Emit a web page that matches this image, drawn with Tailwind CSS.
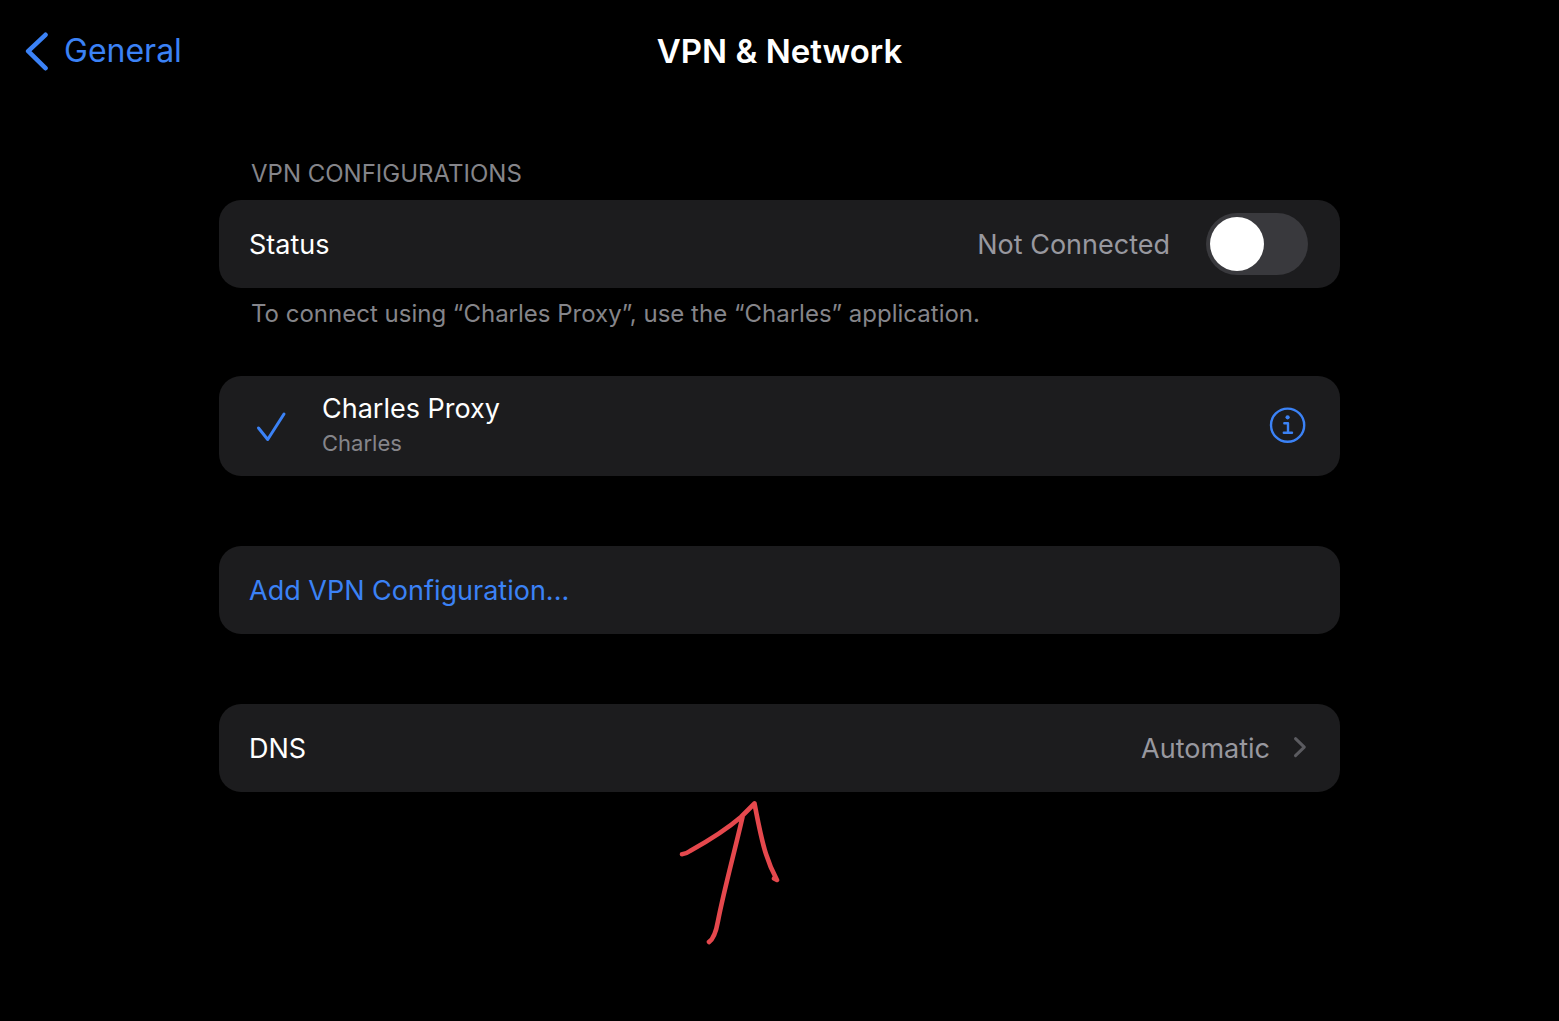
<!DOCTYPE html>
<html lang="en">
<head>
<meta charset="utf-8">
<meta name="viewport" content="width=device-width, initial-scale=1">
<title>VPN &amp; Network</title>
<script src="https://cdn.jsdelivr.net/npm/@tailwindcss/browser@4"></script>
</head>
<body class="min-h-screen bg-black font-['Inter',sans-serif] text-[27px] leading-9 text-white">
<header class="grid h-[102px] grid-cols-[1fr_auto_1fr] items-center px-6">
  <a href="#general" class="flex items-center gap-4 justify-self-start text-[32px] leading-10 text-[#3b82f6]">
    <svg class="h-10 w-6" viewBox="0 0 24 40" fill="none" stroke="currentColor" stroke-width="4.6" stroke-linecap="round" stroke-linejoin="round" aria-hidden="true"><path d="M21.5 3.8 4.2 20.2 21.5 37.2"/></svg>
    General
  </a>
  <h1 class="text-[33px] leading-10 font-semibold">VPN &amp; Network</h1>
</header>
<main class="mx-auto max-w-[1121px] pt-[58px]">
  <section>
    <h2 class="mb-3 px-8 text-2xl leading-7 text-[#85858a]">VPN CONFIGURATIONS</h2>
    <div class="flex h-[88px] items-center rounded-[22px] bg-[#1c1c1e] pr-8 pl-[30px]">
      <label for="status" class="grow pt-0.5">Status</label>
      <span class="mr-9 pt-0.5 text-[#98989f]">Not Connected</span>
      <input id="status" type="checkbox" role="switch" class="flex h-[62px] w-[102px] appearance-none items-center rounded-full bg-[#39393d] px-1 before:size-[54px] before:rounded-full before:bg-white checked:justify-end checked:bg-[#30d158]">
    </div>
    <p class="mt-3 px-8 text-2xl leading-7 text-[#85858a]">To connect using “Charles Proxy”, use the “Charles” application.</p>
  </section>
  <section class="mt-12 flex h-[100px] items-center rounded-[22px] bg-[#1c1c1e] pr-8 pl-9">
    <svg class="h-8 w-8 text-[#3b82f6]" viewBox="0 0 32 32" fill="none" stroke="currentColor" stroke-width="3" stroke-linecap="round" stroke-linejoin="round" aria-hidden="true"><path d="M3.500 18 12.700 29.500 29 4"/></svg>
    <div class="grow pb-0.5 pl-[35px]">
      <h3>Charles Proxy</h3>
      <p class="text-[22px] leading-8 text-[#85858a]">Charles</p>
    </div>
    <button type="button" aria-label="Charles Proxy details" class="text-[#3b82f6]">
      <svg class="size-10" viewBox="0 0 40 40" fill="none" stroke="currentColor" stroke-width="2.4" stroke-linecap="round" stroke-linejoin="round"><circle cx="19.600" cy="19.200" r="16.600"/><path d="M16.300 17.300h3.700V26.800M15.800 26.800h8.200"/><circle cx="19.600" cy="11.300" r="2.100" fill="currentColor" stroke="none"/></svg>
    </button>
  </section>
  <section class="mt-[70px]">
    <button type="button" class="flex h-[88px] w-full items-center rounded-[22px] bg-[#1c1c1e] px-[30px] pt-0.5 text-[#3b82f6]">Add VPN Configuration...</button>
  </section>
  <section class="relative mt-[70px]">
    <a href="#dns" class="flex h-[88px] items-center rounded-[22px] bg-[#1c1c1e] pr-8 pl-[30px]">
      <span class="grow pt-0.5">DNS</span>
      <span class="mr-[22px] pt-0.5 text-[#98989f]">Automatic</span>
      <svg class="h-6 w-4 text-[#5b5b60]" viewBox="0 0 16 24" fill="none" stroke="currentColor" stroke-width="3" stroke-linecap="round" stroke-linejoin="round" aria-hidden="true"><path d="M3.500 2.700 12.300 11.200 3.500 19.700"/></svg>
    </a>
    <svg class="absolute top-full left-[41%] mt-2 h-[146px] w-[104px] text-[#e5484d]" viewBox="679 800 104 146" fill="none" stroke="currentColor" stroke-width="4.6" stroke-linecap="round" stroke-linejoin="round" aria-hidden="true"><path d="M682 854.300Q686 854 690 851C708 841 727 829 741 817Q749 809 754.500 803.500C758 822 762 842 766 854Q770 867 777 880L774 878.500M742.500 817C735 850 724 890 718 921Q715 938 709 942"/></svg>
  </section>
</main>
</body>
</html>
